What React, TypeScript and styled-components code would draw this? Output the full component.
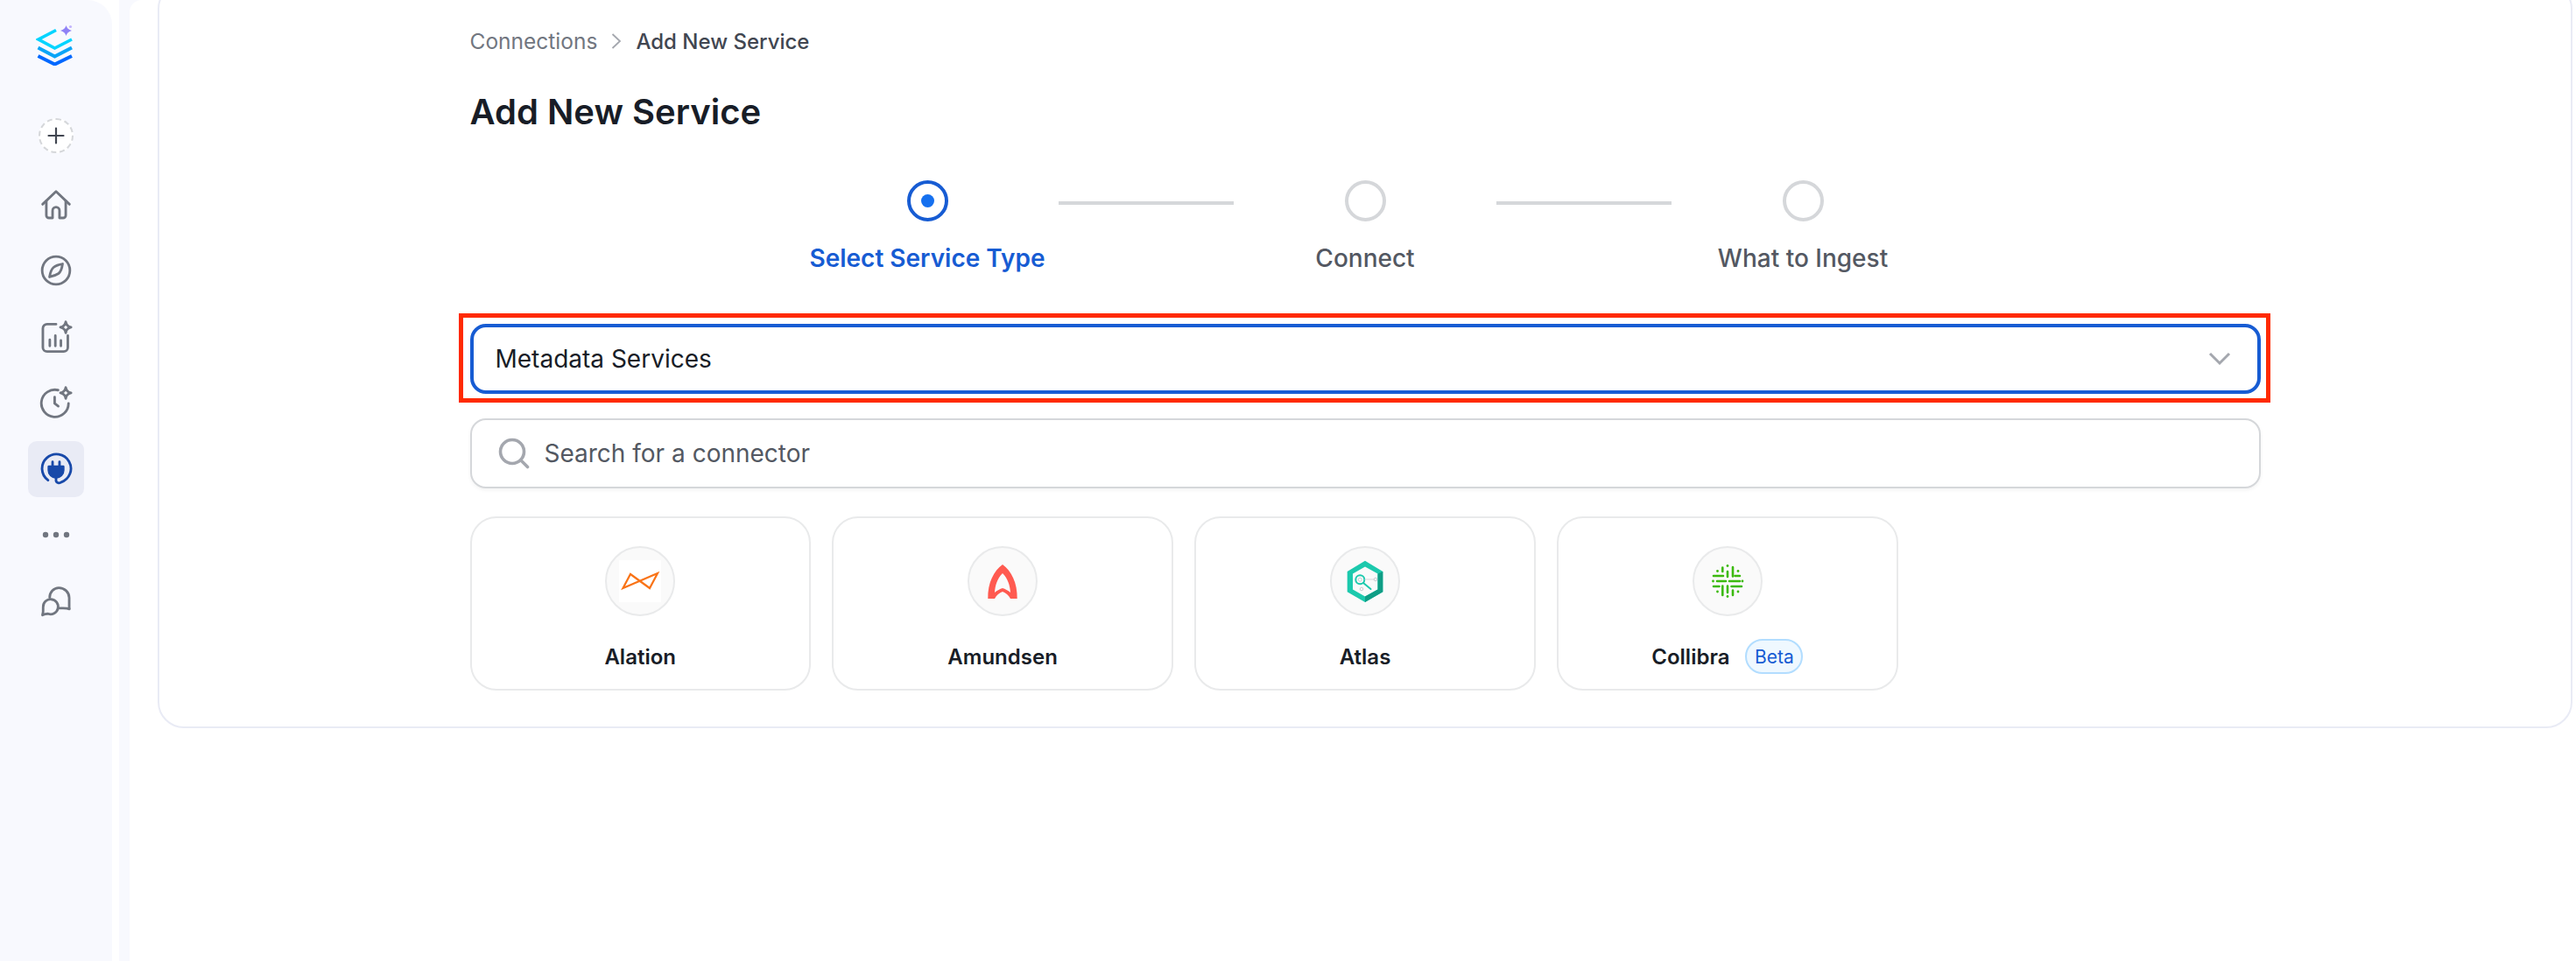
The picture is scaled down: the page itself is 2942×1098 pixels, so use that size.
import React from "react";
import styled, { createGlobalStyle } from "styled-components";

const Global = createGlobalStyle`
  html, body { margin: 0; padding: 0; background: #fff; }
  * { box-sizing: border-box; }
  body { font-family: Inter, "Noto Sans", sans-serif; }
`;

const Page = styled.div`
  display: flex;
  height: 100vh;
  overflow: hidden;
  background: #fff;
`;

const Sidebar = styled.aside`
  flex: 0 0 128px;
  background: #f8f9fe;
  border-top-right-radius: 28px;
  display: flex;
  flex-direction: column;
  align-items: center;
  padding-top: 28px;
`;

const LogoBox = styled.div`
  width: 44px;
  height: 47px;
  margin-bottom: 60px;
  margin-left: -2px;
`;

const AddButton = styled.button`
  width: 40px;
  height: 40px;
  padding: 0;
  border-radius: 50%;
  border: 2px dashed #d5d7da;
  background: #fff;
  display: flex;
  align-items: center;
  justify-content: center;
  margin-bottom: 26.5px;
`;

const Nav = styled.nav`
  display: flex;
  flex-direction: column;
  gap: 11.6px;
`;

const NavItem = styled.div<{ $active?: boolean }>`
  width: 64px;
  height: 64px;
  border-radius: 10px;
  display: flex;
  align-items: center;
  justify-content: center;
  color: ${(p) => (p.$active ? "#1849a9" : "#717680")};
  background: ${(p) => (p.$active ? "#e9ebf5" : "transparent")};
`;

const Gutter = styled.div`
  flex: 1;
  min-width: 0;
  margin-left: 8px;
  padding-left: 12px;
  background: #f8f9fe;
  display: flex;
`;

const Surface = styled.main`
  flex: 1;
  min-width: 0;
  background: #fff;
  border-top-left-radius: 14px;
  padding: 0 4px 0 32px;
`;

const Card = styled.section`
  margin-top: -20px;
  border: 2px solid #e9ebf5;
  border-radius: 30px;
  background: #fff;
  padding: 47px 0 41px;
`;

const Content = styled.div`
  width: 2045px;
  margin: 0 auto;
`;

const Crumbs = styled.div`
  display: flex;
  align-items: center;
  height: 36px;
  font-size: 24.5px;
  font-weight: 400;
  color: #717680;
`;

const CrumbSep = styled.span`
  display: flex;
  margin: 0 16px;
  color: #a4a7ae;
`;

const CrumbCurrent = styled.span`
  color: #414651;
  font-size: 24px;
  font-weight: 500;
`;

const Title = styled.h1`
  margin: 37px 0 0;
  font-size: 40px;
  line-height: 52px;
  font-weight: 600;
  color: #181d27;
`;

const Stepper = styled.div`
  display: flex;
  justify-content: center;
  align-items: flex-start;
  margin-top: 52px;
`;

const Step = styled.div`
  width: 300px;
  display: flex;
  flex-direction: column;
  align-items: center;
`;

const StepDot = styled.div<{ $active?: boolean }>`
  width: 47px;
  height: 47px;
  border-radius: 50%;
  border: 4px solid ${(p) => (p.$active ? "#175cd3" : "#d5d7da")};
  display: flex;
  align-items: center;
  justify-content: center;
  &::after {
    content: "";
    display: ${(p) => (p.$active ? "block" : "none")};
    width: 15px;
    height: 15px;
    border-radius: 50%;
    background: #1570ef;
  }
`;

const StepLabel = styled.div<{ $active?: boolean }>`
  margin-top: 24px;
  font-size: 28px;
  line-height: 36px;
  font-weight: ${(p) => (p.$active ? 600 : 500)};
  color: ${(p) => (p.$active ? "#175cd3" : "#535862")};
`;

const Connector = styled.div`
  width: 200px;
  height: 4px;
  margin-top: 24px;
  background: #d5d7da;
`;

const SelectWrap = styled.div`
  position: relative;
  margin-top: 57px;
`;

const SelectBox = styled.div`
  height: 80px;
  border: 4px solid #175cd3;
  border-radius: 18px;
  background: #fff;
  padding: 0 30px 0 25px;
  display: flex;
  align-items: center;
  justify-content: space-between;
  font-size: 28px;
  color: #181d27;
`;

const Highlight = styled.div`
  position: absolute;
  top: -12px;
  right: -11px;
  bottom: -10px;
  left: -13px;
  border: 5px solid #ff2a00;
  pointer-events: none;
`;

const SearchBox = styled.div`
  height: 80px;
  margin-top: 28px;
  border: 2px solid #d5d7da;
  border-radius: 18px;
  background: #fff;
  box-shadow: 0 2px 4px rgba(10, 13, 18, 0.05);
  padding: 0 0 0 30px;
  display: flex;
  align-items: center;
  gap: 17px;
  font-size: 28px;
  color: #535862;
`;

const Grid = styled.div`
  display: grid;
  grid-template-columns: repeat(5, 1fr);
  gap: 24.5px;
  margin-top: 32px;
`;

const Tile = styled.div`
  height: 199px;
  border: 2px solid #e9eaeb;
  border-radius: 30px;
  background: #fff;
  padding-top: 32px;
  display: flex;
  flex-direction: column;
  align-items: center;
`;

const LogoCircle = styled.div`
  width: 80px;
  height: 80px;
  border-radius: 50%;
  border: 2px solid #e9eaeb;
  background: #fafafa;
  display: flex;
  align-items: center;
  justify-content: center;
`;

const LogoImage = styled.svg<{ $white?: boolean }>`
  width: 48px;
  height: 48px;
  background: ${(p) => (p.$white ? "#fff" : "transparent")};
`;

const TileLabel = styled.div`
  margin-top: 26px;
  height: 40px;
  display: flex;
  align-items: center;
  gap: 18px;
  font-size: 24px;
  font-weight: 600;
  color: #181d27;
`;

const Beta = styled.span`
  width: 66px;
  height: 40px;
  border-radius: 20px;
  border: 2px solid #b2ddff;
  background: #eff8ff;
  color: #175cd3;
  font-size: 21px;
  font-weight: 400;
  display: flex;
  align-items: center;
  justify-content: center;
`;

const LineIcon = ({ children, size = 38 }: { children: React.ReactNode; size?: number }) => (
  <svg width={size} height={size} viewBox="0 0 24 24" fill="none" stroke="currentColor" strokeWidth="1.8" strokeLinecap="round" strokeLinejoin="round">
    {children}
  </svg>
);

const Logo = () => (
  <svg width="44" height="47" viewBox="0 0 44 47" fill="none">
    <path d="M23 6.5 L3 17 L21.5 27 L41 17" stroke="#00d4ff" strokeWidth="3.6" />
    <path d="M2.5 26.5 L21.5 36.5 L41 26.5" stroke="#0aa5f7" strokeWidth="4" />
    <path d="M2.5 36 L21.5 45.5 L41 36" stroke="#0068ff" strokeWidth="4" />
    <path d="M34.5 0.5 Q35.5 5 41 6.5 Q35.5 8 34.5 12.5 Q33.5 8 28 6.5 Q33.5 5 34.5 0.5Z" fill="#7c6cf5" opacity="0.85" transform="translate(0 0.5)" />
    <circle cx="39.5" cy="2.5" r="1.6" fill="#c4b5fd" />
  </svg>
);

const Sparkle = () => <path d="M19 1 Q19.4 4.1 22.8 5 Q19.4 5.9 19 9 Q18.6 5.9 15.2 5 Q18.6 4.1 19 1Z" />;

const AlationLogo = () => (
  <LogoImage $white viewBox="0 0 48 48" fill="none">
    <path d="M4.5 32 L13 16 L35 32 L44 15 Z" stroke="#f97316" strokeWidth="2.2" strokeLinejoin="miter" />
  </LogoImage>
);

const AmundsenLogo = () => (
  <LogoImage viewBox="0 0 48 48">
    <path
      fillRule="evenodd"
      fill="#ff5a50"
      d="M24 5 C34 12 41 26 40.7 44 L33 44 C31 40 27.5 37.5 24 36 C20.5 37.5 17 40 15 44 L7.3 44 C7 26 14 12 24 5Z M24 15 C18 21 15.5 29 15 37 C18 34.5 21 33 24 32 C27 33 30 34.5 33 37 C32.5 29 30 21 24 15Z"
    />
  </LogoImage>
);

const AtlasLogo = () => (
  <LogoImage viewBox="0 0 48 48" fill="none">
    <path fillRule="evenodd" fill="#1cc9ad" d="M24 0.7 L44.3 13 V36.3 L24 48 L3.7 36.3 V13Z M24 7.5 L10 15.5 V33.5 L24 41.5 L38.5 33.5 V15.5Z" />
    <path d="M44.3 13 V36.3 L24 48 V41.5 L38.5 33.5 V15.5Z" fill="#0f9d85" />
    <circle cx="18.3" cy="22.3" r="5" stroke="#1cc9ad" strokeWidth="2" />
    <circle cx="18.3" cy="22.3" r="2" stroke="#c9ccd1" strokeWidth="1" />
    <path d="M22 26 L30.5 33" stroke="#1cc9ad" strokeWidth="2" strokeLinecap="round" />
    <path d="M23.5 22 H34" stroke="#d5d7da" strokeWidth="1" />
    <circle cx="36" cy="22" r="1.8" stroke="#c9ccd1" strokeWidth="1" />
    <circle cx="20" cy="33" r="1.8" stroke="#c9ccd1" strokeWidth="1" />
  </LogoImage>
);

const CollibraLogo = () => (
  <LogoImage viewBox="0 0 48 48" fill="none">
    <g stroke="#3cba0e" strokeWidth="2.6" strokeLinecap="round">
      <path d="M8 18 H19 M32.5 18 H38" />
      <path d="M12 24 H22 M26 24 H38" />
      <path d="M8 30 H14.5 M28.5 30 H40" />
      <path d="M18.3 8.5 V13 M18.3 29.5 V40" />
      <path d="M24 13 V19 M24 29.5 V37" />
      <path d="M30 8 V18.5 M30 34.5 V40" />
    </g>
    <g fill="#3cba0e">
      <circle cx="7.5" cy="24" r="1.4" />
      <circle cx="41" cy="24" r="1.4" />
      <circle cx="24" cy="6.5" r="1.4" />
      <circle cx="24" cy="41.5" r="1.4" />
      <circle cx="12.5" cy="12.5" r="1.4" />
      <circle cx="36" cy="12.5" r="1.4" />
      <circle cx="12.5" cy="36" r="1.4" />
      <circle cx="36" cy="36" r="1.4" />
    </g>
  </LogoImage>
);

const tiles: { name: string; logo: React.ReactNode; beta?: boolean }[] = [
  { name: "Alation", logo: <AlationLogo /> },
  { name: "Amundsen", logo: <AmundsenLogo /> },
  { name: "Atlas", logo: <AtlasLogo /> },
  { name: "Collibra", logo: <CollibraLogo />, beta: true },
];

export default function App() {
  return (
    <Page>
      <Global />
      <Sidebar>
        <LogoBox>
          <Logo />
        </LogoBox>
        <AddButton aria-label="Add">
          <svg width="22" height="22" viewBox="0 0 22 22" fill="none" stroke="#414651" strokeWidth="2.2" strokeLinecap="round">
            <path d="M11 2.5 V19.5 M2.5 11 H19.5" />
          </svg>
        </AddButton>
        <Nav>
          <NavItem>
            <LineIcon>
              <path d="M2.3 11.6 L12 2.4 L21.7 11.6" />
              <path d="M5 9.2 V19.6 A1.9 1.9 0 0 0 6.9 21.5 H9.5 V16.2 A2.5 2.5 0 0 1 14.5 16.2 V21.5 H17.1 A1.9 1.9 0 0 0 19 19.6 V9.2" />
            </LineIcon>
          </NavItem>
          <NavItem>
            <LineIcon>
              <circle cx="12" cy="12" r="10" />
              <path d="M16.7 7.3 C16.2 11 14.9 13.4 13.8 14.2 C12.6 15 10 16.1 7.3 16.7 C7.8 13.6 8.8 11 10.2 9.8 C11.6 8.6 14 7.7 16.7 7.3Z" />
            </LineIcon>
          </NavItem>
          <NavItem>
            <LineIcon>
              <path d="M12 2.8 H5.5 A3 3 0 0 0 2.5 5.8 V19.5 A3 3 0 0 0 5.5 22.5 H17.5 A3 3 0 0 0 20.5 19.5 V11" />
              <path d="M7.5 14 V18.5 M11.5 11 V18.5 M15.5 14.5 V18.5" />
              <Sparkle />
            </LineIcon>
          </NavItem>
          <NavItem>
            <LineIcon>
              <path d="M13.5 3 A9.8 9.8 0 1 0 21 12.6" />
              <path d="M11 8 V12.6 L13.6 14.6" />
              <Sparkle />
            </LineIcon>
          </NavItem>
          <NavItem $active>
            <LineIcon>
              <path d="M6.2 20 A10.4 10.4 0 1 1 15.5 21.5 C14.2 22.5 12.5 22 12 20.5 V18.5" />
              <path d="M6.8 10.2 H17.2 V12.8 A5.2 5.2 0 0 1 6.8 12.8Z" fill="currentColor" />
              <path d="M9.5 6.8 V10 M14.5 6.8 V10" />
            </LineIcon>
          </NavItem>
          <NavItem>
            <svg width="32" height="8" viewBox="0 0 32 8" fill="#717680">
              <circle cx="4" cy="4" r="3.2" />
              <circle cx="16" cy="4" r="3.2" />
              <circle cx="28" cy="4" r="3.2" />
            </svg>
          </NavItem>
          <NavItem>
            <LineIcon>
              <path d="M7.4 9.3 C7.4 5.3 10.5 2.3 14 2.3 C18 2.3 21.5 5.4 21.5 9.5 V16.5 L21.7 17.6 C20.5 17.1 18.5 17 17 17 H13.7" />
              <path d="M2.7 16.2 A5.4 5.4 0 1 1 6.2 21 C5 21 3.5 21.3 2.2 21.9 C2.7 20.5 2.8 18 2.7 16.2Z" />
            </LineIcon>
          </NavItem>
        </Nav>
      </Sidebar>
      <Gutter>
        <Surface>
          <Card>
            <Content>
              <Crumbs>
                Connections
                <CrumbSep>
                  <svg width="12" height="20" viewBox="0 0 12 20" fill="none" stroke="currentColor" strokeWidth="1.8">
                    <path d="M1.5 2 L10 10 L1.5 18" />
                  </svg>
                </CrumbSep>
                <CrumbCurrent>Add New Service</CrumbCurrent>
              </Crumbs>
              <Title>Add New Service</Title>
              <Stepper>
                <Step>
                  <StepDot $active />
                  <StepLabel $active>Select Service Type</StepLabel>
                </Step>
                <Connector />
                <Step>
                  <StepDot />
                  <StepLabel>Connect</StepLabel>
                </Step>
                <Connector />
                <Step>
                  <StepDot />
                  <StepLabel>What to Ingest</StepLabel>
                </Step>
              </Stepper>
              <SelectWrap>
                <SelectBox>
                  Metadata Services
                  <svg width="26" height="16" viewBox="0 0 26 16" fill="none" stroke="#a4a7ae" strokeWidth="3">
                    <path d="M2 2 L13 13 L24 2" />
                  </svg>
                </SelectBox>
                <Highlight />
              </SelectWrap>
              <SearchBox>
                <svg width="36" height="36" viewBox="0 0 36 36" fill="none" stroke="#a4a7ae" strokeWidth="3.6" strokeLinecap="round">
                  <circle cx="16" cy="16" r="13.5" />
                  <path d="M26 26 L33.5 33.5" />
                </svg>
                Search for a connector
              </SearchBox>
              <Grid>
                {tiles.map((t) => (
                  <Tile key={t.name}>
                    <LogoCircle>{t.logo}</LogoCircle>
                    <TileLabel>
                      {t.name}
                      {t.beta && <Beta>Beta</Beta>}
                    </TileLabel>
                  </Tile>
                ))}
              </Grid>
            </Content>
          </Card>
        </Surface>
      </Gutter>
    </Page>
  );
}
